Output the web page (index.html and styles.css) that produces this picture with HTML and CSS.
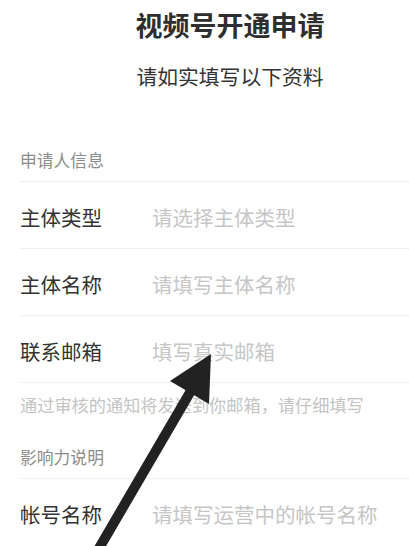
FILE: index.html
```html
<!DOCTYPE html>
<html lang="zh-CN">
<head>
<meta charset="utf-8">
<title>视频号开通申请</title>
<link rel="stylesheet" href="styles.css">
</head>
<body>
<div class="page">
  <header class="header">
    <h1 class="title">视频号开通申请</h1>
    <p class="subtitle">请如实填写以下资料</p>
  </header>

  <section class="section">
    <div class="section-head">申请人信息</div>
    <div class="row">
      <span class="label">主体类型</span>
      <span class="placeholder">请选择主体类型</span>
    </div>
    <div class="row">
      <span class="label">主体名称</span>
      <span class="placeholder">请填写主体名称</span>
    </div>
    <div class="row">
      <span class="label">联系邮箱</span>
      <span class="placeholder">填写真实邮箱</span>
    </div>
    <div class="hint">通过审核的通知将发送到你邮箱，请仔细填写</div>
  </section>

  <section class="section">
    <div class="section-head section-head--tight">影响力说明</div>
    <div class="row">
      <span class="label">帐号名称</span>
      <span class="placeholder">请填写运营中的帐号名称</span>
    </div>
  </section>

  <svg class="arrow" width="409" height="546" viewBox="0 0 409 546" aria-hidden="true">
    <line x1="91" y1="562" x2="192" y2="389" stroke="#222" stroke-width="10"/>
    <polygon points="211,354 170,381 209,404" fill="#222"/>
  </svg>
</div>
</body>
</html>
```

FILE: styles.css
```css
html, body {
  margin: 0;
  padding: 0;
  background: #ffffff;
}

body {
  font-family: "Noto Sans CJK SC", "Noto Sans", sans-serif;
  color: #333333;
  overflow: hidden;
}

.page {
  position: relative;
  width: 409px;
  height: 546px;
  overflow: hidden;
}

.header {
  display: flex;
  flex-direction: column;
  align-items: center;
  padding: 8px 0 0 51px;
}

.title {
  margin: 0;
  font-size: 27px;
  line-height: 34px;
  font-weight: 700;
  color: #2e2e2e;
  letter-spacing: 0;
}

.subtitle {
  margin: 20px 0 0;
  font-size: 20.8px;
  line-height: 28px;
  font-weight: 400;
  color: #333333;
}

.section {
  display: flex;
  flex-direction: column;
  padding-left: 20px;
}

.section-head {
  margin-top: 58px;
  font-size: 16.8px;
  line-height: 24px;
  color: #8c8c8c;
  padding-bottom: 9px;
  border-bottom: 1px solid #f0f0f0;
}

.section-head--tight {
  margin-top: 28px;
}

.row {
  display: flex;
  align-items: center;
  height: 66px;
  border-bottom: 1px solid #f0f0f0;
}

.row:last-child {
  border-bottom: none;
}

.label {
  width: 132px;
  flex: none;
  font-size: 20.5px;
  line-height: 28px;
  color: #333333;
  padding-top: 3px;
}

.placeholder {
  font-size: 20.5px;
  line-height: 28px;
  color: #c6c6c6;
  padding-top: 3px;
}

.hint {
  padding-top: 10px;
  font-size: 17.2px;
  line-height: 24px;
  color: #c4c4c4;
}

.arrow {
  position: absolute;
  left: 0;
  top: 0;
}
```
